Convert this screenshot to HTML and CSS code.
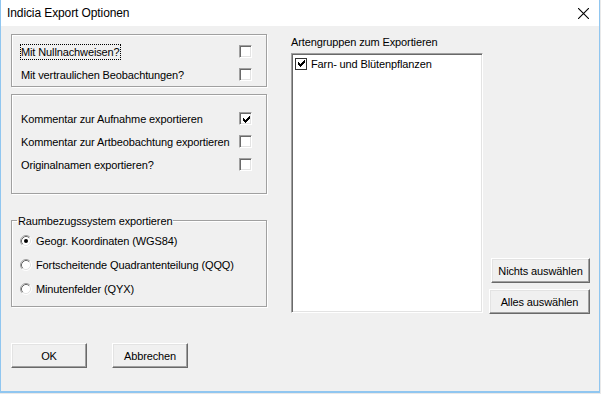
FILE: index.html
```html
<!DOCTYPE html>
<html>
<head>
    <meta charset="UTF-8">
    <title>Indicia Export Optionen</title>
    <link rel="stylesheet" href="styles.css">
</head>
<body>
<div class="window">
    <div class="titlebar">
        <span class="title">Indicia Export Optionen</span>
        <svg class="close" width="11" height="11" viewBox="0 0 11 11">
            <path d="M0 0 L11 11 M11 0 L0 11" stroke="#000" stroke-width="1.1" fill="none"/>
        </svg>
    </div>

    <div class="client">
        <div class="main">
            <div class="left">
                <div class="group g1">
                    <div class="row"><span class="focus">Mit Nullnachweisen?</span><span class="check"></span></div>
                    <div class="row"><span>Mit vertraulichen Beobachtungen?</span><span class="check"></span></div>
                </div>

                <div class="group g2">
                    <div class="row">
                        <span>Kommentar zur Aufnahme exportieren</span>
                        <span class="check">
                            <svg width="9" height="9" viewBox="0 0 9 9" shape-rendering="crispEdges"><path d="M1 3 H2 V4 H3 V5 H4 V4 H5 V3 H6 V2 H7 V1 H8 V4 H7 V5 H6 V6 H5 V7 H4 V8 H3 V7 H2 V6 H1 Z" fill="#000"/></svg>
                        </span>
                    </div>
                    <div class="row"><span>Kommentar zur Artbeobachtung exportieren</span><span class="check"></span></div>
                    <div class="row"><span>Originalnamen exportieren?</span><span class="check"></span></div>
                </div>

                <fieldset class="group g3">
                    <legend>Raumbezugssystem exportieren</legend>
                    <div class="radio-row">
                        <svg class="radio" width="12" height="12" viewBox="0 0 12 12">
                            <circle cx="6" cy="6" r="5" fill="#fff"/>
                            <path d="M2.11 9.89 A5.5 5.5 0 0 1 9.89 2.11" stroke="#a0a0a0" fill="none"/>
                            <path d="M9.89 2.11 A5.5 5.5 0 0 1 2.11 9.89" stroke="#fff" fill="none"/>
                            <path d="M2.82 9.18 A4.5 4.5 0 0 1 9.18 2.82" stroke="#696969" fill="none"/>
                            <path d="M9.18 2.82 A4.5 4.5 0 0 1 2.82 9.18" stroke="#e3e3e3" fill="none"/>
                            <circle cx="6" cy="6" r="2" fill="#000"/>
                        </svg>
                        <span>Geogr. Koordinaten (WGS84)</span>
                    </div>
                    <div class="radio-row">
                        <svg class="radio" width="12" height="12" viewBox="0 0 12 12">
                            <circle cx="6" cy="6" r="5" fill="#fff"/>
                            <path d="M2.11 9.89 A5.5 5.5 0 0 1 9.89 2.11" stroke="#a0a0a0" fill="none"/>
                            <path d="M9.89 2.11 A5.5 5.5 0 0 1 2.11 9.89" stroke="#fff" fill="none"/>
                            <path d="M2.82 9.18 A4.5 4.5 0 0 1 9.18 2.82" stroke="#696969" fill="none"/>
                            <path d="M9.18 2.82 A4.5 4.5 0 0 1 2.82 9.18" stroke="#e3e3e3" fill="none"/>
                        </svg>
                        <span>Fortscheitende Quadrantenteilung (QQQ)</span>
                    </div>
                    <div class="radio-row">
                        <svg class="radio" width="12" height="12" viewBox="0 0 12 12">
                            <circle cx="6" cy="6" r="5" fill="#fff"/>
                            <path d="M2.11 9.89 A5.5 5.5 0 0 1 9.89 2.11" stroke="#a0a0a0" fill="none"/>
                            <path d="M9.89 2.11 A5.5 5.5 0 0 1 2.11 9.89" stroke="#fff" fill="none"/>
                            <path d="M2.82 9.18 A4.5 4.5 0 0 1 9.18 2.82" stroke="#696969" fill="none"/>
                            <path d="M9.18 2.82 A4.5 4.5 0 0 1 2.82 9.18" stroke="#e3e3e3" fill="none"/>
                        </svg>
                        <span>Minutenfelder (QYX)</span>
                    </div>
                </fieldset>
            </div>

            <div class="species">
                <div class="caption">Artengruppen zum Exportieren</div>
                <div class="listbox">
                    <div class="item">
                        <span class="flat-check">
                            <svg width="9" height="9" viewBox="0 0 9 9" shape-rendering="crispEdges"><path d="M1 3 H2 V4 H3 V5 H4 V4 H5 V3 H6 V2 H7 V1 H8 V4 H7 V5 H6 V6 H5 V7 H4 V8 H3 V7 H2 V6 H1 Z" fill="#000"/></svg>
                        </span>
                        <span>Farn- und Blütenpflanzen</span>
                    </div>
                </div>
            </div>

            <div class="side">
                <button class="btn btn-none">Nichts auswählen</button>
                <button class="btn btn-all">Alles auswählen</button>
            </div>
        </div>

        <div class="footer">
            <button class="btn btn-dialog">OK</button>
            <button class="btn btn-dialog">Abbrechen</button>
        </div>
    </div>
</div>
</body>
</html>
```

FILE: styles.css
```css
html { background: #e9e9e9; }
body { margin: 0; font-family: "Liberation Sans", Arial, sans-serif; font-size: 11px; color: #000; }

.window { width: 598px; height: 391px; background: #f0f0f0; border: 1px solid #90c6f0; border-top: none; border-bottom-width: 2px; display: flex; flex-direction: column; }

.titlebar { height: 26px; background: #fff; display: flex; align-items: center; justify-content: space-between; padding: 0 10px 0 6px; }
.title { font-size: 12px; line-height: 16px; letter-spacing: -0.1px; }
.close { display: block; }

.client { flex: 1; display: flex; flex-direction: column; padding: 0 9px 0 10px; letter-spacing: -0.12px; }
.main { display: flex; }

.left { width: 256px; padding-top: 8px; }
.group { box-sizing: border-box; border: 1px solid #a0a0a0; box-shadow: inset 1px 1px #fff, 1px 1px #fff; }
.g1 { height: 53px; padding: 5px 14px 0 9px; }
.g2 { height: 100px; margin-top: 7px; padding: 12px 14px 0 9px; }
.g3 { margin: 19px 0 0; padding: 1px 0 5px 8px; min-width: 0; }
.g3 legend { padding: 2px 1px 0; margin-left: -3px; line-height: 13px; }

.row { height: 23px; display: flex; align-items: center; justify-content: space-between; }
.focus { line-height: 14px; outline: 1px dotted #000; outline-offset: 0; }

.check { box-sizing: border-box; width: 13px; height: 13px; background: #fff; border: 1px solid; border-color: #a0a0a0 #fff #fff #a0a0a0; box-shadow: inset 1px 1px #696969, inset -1px -1px #e3e3e3; display: flex; align-items: center; justify-content: center; }
.check svg { display: block; margin: 1px 0 0 1px; }

.radio-row { height: 24px; display: flex; align-items: center; }
.radio { display: block; margin-right: 4px; }

.species { padding-top: 9px; margin-left: 24px; }
.caption { line-height: 14px; margin-bottom: 4px; }
.listbox { box-sizing: border-box; width: 192px; height: 260px; background: #fff; border: 1px solid; border-color: #a0a0a0 #fff #fff #a0a0a0; box-shadow: inset 1px 1px #696969, inset -1px -1px #e3e3e3; padding: 3px 0 0 3px; }
.item { display: flex; align-items: center; height: 13px; gap: 4px; }
.flat-check { box-sizing: border-box; width: 12px; height: 12px; border: 1px solid #333; background: #fff; display: flex; align-items: center; justify-content: center; }
.flat-check svg { display: block; }

.side { margin-left: auto; align-self: flex-end; display: flex; flex-direction: column; align-items: flex-end; gap: 6px; margin-bottom: -1px; }

.btn { box-sizing: border-box; height: 25px; padding: 0; font: inherit; letter-spacing: inherit; color: #000; background: #f0f0f0; border: 1px solid; border-color: #fff #696969 #696969 #fff; box-shadow: inset -1px -1px #a0a0a0, inset 1px 1px #e3e3e3; }
.btn-none { width: 99px; }
.btn-all { width: 101px; }

.footer { display: flex; gap: 25px; margin-top: 30px; }
.btn-dialog { width: 76px; }
```
